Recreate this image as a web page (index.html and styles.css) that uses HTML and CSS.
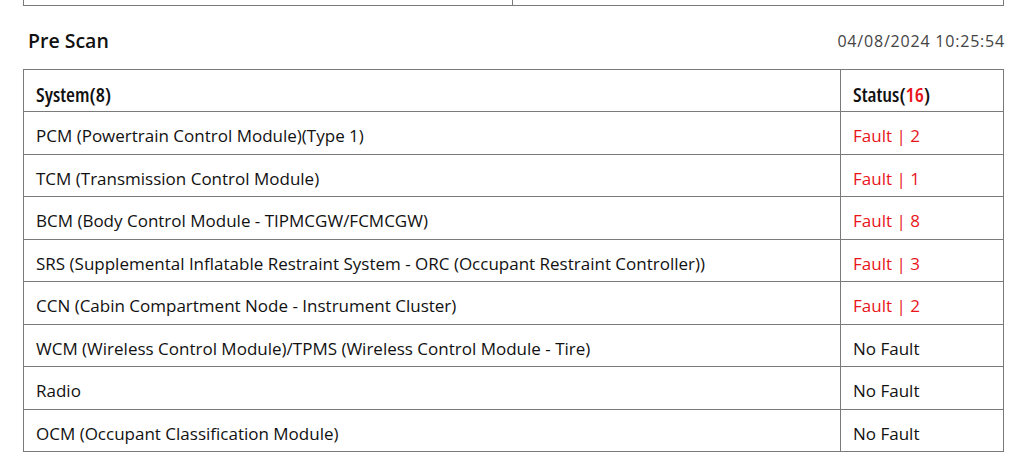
FILE: index.html
```html
<!DOCTYPE html>
<html>
<head>
<meta charset="utf-8">
<link rel="stylesheet" href="styles.css">
</head>
<body>
<div class="page">
  <table class="grid prev">
    <tr><td class="half"></td><td></td></tr>
  </table>
  <div class="section-head">
    <h2 class="title">Pre Scan</h2>
    <span class="date">04/08/2024 10:25:54</span>
  </div>
  <table class="grid scan">
    <thead>
      <tr><th class="sys">System(8)</th><th class="st">Status(<span class="red">16</span>)</th></tr>
    </thead>
    <tbody>
      <tr><td>PCM (Powertrain Control Module)(Type 1)</td><td class="red">Fault | 2</td></tr>
      <tr><td>TCM (Transmission Control Module)</td><td class="red">Fault | 1</td></tr>
      <tr><td>BCM (Body Control Module - TIPMCGW/FCMCGW)</td><td class="red">Fault | 8</td></tr>
      <tr><td>SRS (Supplemental Inflatable Restraint System - ORC (Occupant Restraint Controller))</td><td class="red">Fault | 3</td></tr>
      <tr><td>CCN (Cabin Compartment Node - Instrument Cluster)</td><td class="red">Fault | 2</td></tr>
      <tr><td>WCM (Wireless Control Module)/TPMS (Wireless Control Module - Tire)</td><td>No Fault</td></tr>
      <tr><td>Radio</td><td>No Fault</td></tr>
      <tr><td>OCM (Occupant Classification Module)</td><td>No Fault</td></tr>
    </tbody>
  </table>
</div>
</body>
</html>
```
FILE: styles.css
```css
html, body {
  margin: 0;
  padding: 0;
  background: #fff;
}
.page {
  width: 981px;
  margin-left: 23px;
  font-family: "Open Sans", "Noto Sans", sans-serif;
  color: #111;
}
.grid {
  width: 981px;
  border-collapse: collapse;
  table-layout: fixed;
}
.grid td, .grid th {
  border: 1px solid #7a7a7a;
  padding: 0 12px;
  text-align: left;
}
.prev {
  margin-top: -10px;
}
.prev td {
  height: 14px;
}
.prev .half {
  width: 464px;
}
.section-head {
  display: flex;
  justify-content: space-between;
  align-items: center;
  height: 57px;
  padding-left: 5px;
  padding-top: 6px;
}
.title {
  margin: 0;
  font-size: 19.5px;
  font-weight: 600;
  color: #111;
}
.date {
  font-size: 16px;
  letter-spacing: 0.8px;
  margin-right: -1px;
  color: #444;
}
.scan th, .scan td {
  height: 35.5px;
  padding-top: 6px;
  padding-bottom: 0;
  font-size: 17px;
  font-weight: 400;
}
.scan th {
  height: 35px;
  font-size: 20.5px;
  font-stretch: condensed;
  font-weight: 600;
}
.scan .sys {
  width: 792px;
}
.red {
  color: #e8141a;
}
```
